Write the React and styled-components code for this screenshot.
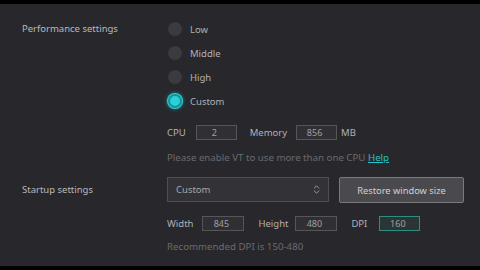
import React from "react";
import styled, { createGlobalStyle } from "styled-components";
import { ChevronsUpDown } from "lucide-react";

const Global = createGlobalStyle`
  html, body {
    margin: 0;
    padding: 0;
    background: #000;
  }
  body {
    font-family: "Noto Sans", "Open Sans", sans-serif;
  }
`;

const Screen = styled.div`
  width: 480px;
  height: 270px;
  box-sizing: border-box;
  padding: 4px 0;
  background: #000;
  overflow: hidden;
`;

const Panel = styled.div`
  height: 262px;
  background: #28282c;
  box-sizing: border-box;
  padding-top: 18px;
  color: #b0b0b4;
  font-size: 9.5px;
`;

const Section = styled.div`
  display: grid;
  grid-template-columns: 167px 1fr;
  margin-bottom: ${(p) => p.gap || 0}px;
`;

const Title = styled.div`
  padding-left: 22px;
  line-height: 14px;
  padding-top: ${(p) => p.top || 0}px;
  color: #b8b8bc;
`;

const Column = styled.div`
  display: flex;
  flex-direction: column;
`;

const RadioRow = styled.div`
  display: flex;
  align-items: center;
  height: 14px;
  margin-bottom: 10px;
  gap: 8px;
`;

const Dot = styled.span`
  width: 14px;
  height: 14px;
  border-radius: 50%;
  box-sizing: border-box;
  background: ${(p) => (p.on ? "#2ad0d8" : "#3b3b3f")};
  border: ${(p) => (p.on ? "2px solid #1a8f96" : "none")};
  box-shadow: ${(p) => (p.on ? "0 0 0 1px #2ad0d8, 0 0 4px #2ad0d8" : "none")};
  margin-left: 1px;
`;

const Line = styled.div`
  display: flex;
  align-items: center;
  height: ${(p) => p.h || 16}px;
  margin-top: ${(p) => p.mt || 0}px;
`;

const Label = styled.span`
  margin-right: ${(p) => p.mr || 0}px;
  margin-left: ${(p) => p.ml || 0}px;
`;

const Field = styled.div`
  width: ${(p) => p.w || 41}px;
  height: 15px;
  box-sizing: border-box;
  border: 1px solid ${(p) => (p.active ? "#2a8e8a" : "#55555a")};
  background: ${(p) => (p.active ? "#2b3634" : "#303034")};
  color: #a0a0a4;
  font-size: 9px;
  line-height: 13px;
  text-align: center;
  padding-right: 4px;
`;

const Hint = styled.div`
  color: #6a6a6e;
  font-size: 9.7px;
  line-height: 12px;
  margin-top: ${(p) => p.mt || 0}px;
`;

const Link = styled.span`
  color: #26c0c8;
  text-decoration: underline;
`;

const Controls = styled.div`
  display: flex;
  gap: 10px;
  height: 26px;
`;

const Select = styled.div`
  width: 162px;
  height: 25px;
  box-sizing: border-box;
  border: 1px solid #4d4d52;
  background: #333337;
  display: flex;
  align-items: center;
  justify-content: space-between;
  padding: 0 6px 0 8px;
  color: #a8a8ac;
`;

const Button = styled.div`
  width: 125px;
  height: 26px;
  box-sizing: border-box;
  border: 1px solid #7a7a7e;
  background: #4a4a4e;
  border-radius: 2px;
  display: flex;
  align-items: center;
  justify-content: center;
  color: #d0d0d4;
  font-size: 9.3px;
`;

export default function App() {
  const modes = ["Low", "Middle", "High", "Custom"];
  return (
    <Screen>
      <Global />
      <Panel>
        <Section gap={13}>
          <Title>Performance settings</Title>
          <Column>
            {modes.map((m) => (
              <RadioRow key={m}>
                <Dot on={m === "Custom"} />
                <span>{m}</span>
              </RadioRow>
            ))}
            <Line mt={6}>
              <Label mr={10}>CPU</Label>
              <Field w={41}>2</Field>
              <Label ml={13} mr={9}>Memory</Label>
              <Field w={41}>856</Field>
              <Label ml={4}>MB</Label>
            </Line>
            <Hint mt={12}>
              Please enable VT to use more than one CPU <Link>Help</Link>
            </Hint>
          </Column>
        </Section>
        <Section>
          <Title top={6}>Startup settings</Title>
          <Column>
            <Controls>
              <Select>
                <span>Custom</span>
                <ChevronsUpDown size={11} color="#c0c0c4" strokeWidth={1.6} />
              </Select>
              <Button>Restore window size</Button>
            </Controls>
            <Line mt={12}>
              <Label mr={9}>Width</Label>
              <Field w={42}>845</Field>
              <Label ml={14} mr={7}>Height</Label>
              <Field w={42}>480</Field>
              <Label ml={14} mr={12}>DPI</Label>
              <Field w={41} active>160</Field>
            </Line>
            <Hint mt={10}>Recommended DPI is 150-480</Hint>
          </Column>
        </Section>
      </Panel>
    </Screen>
  );
}
